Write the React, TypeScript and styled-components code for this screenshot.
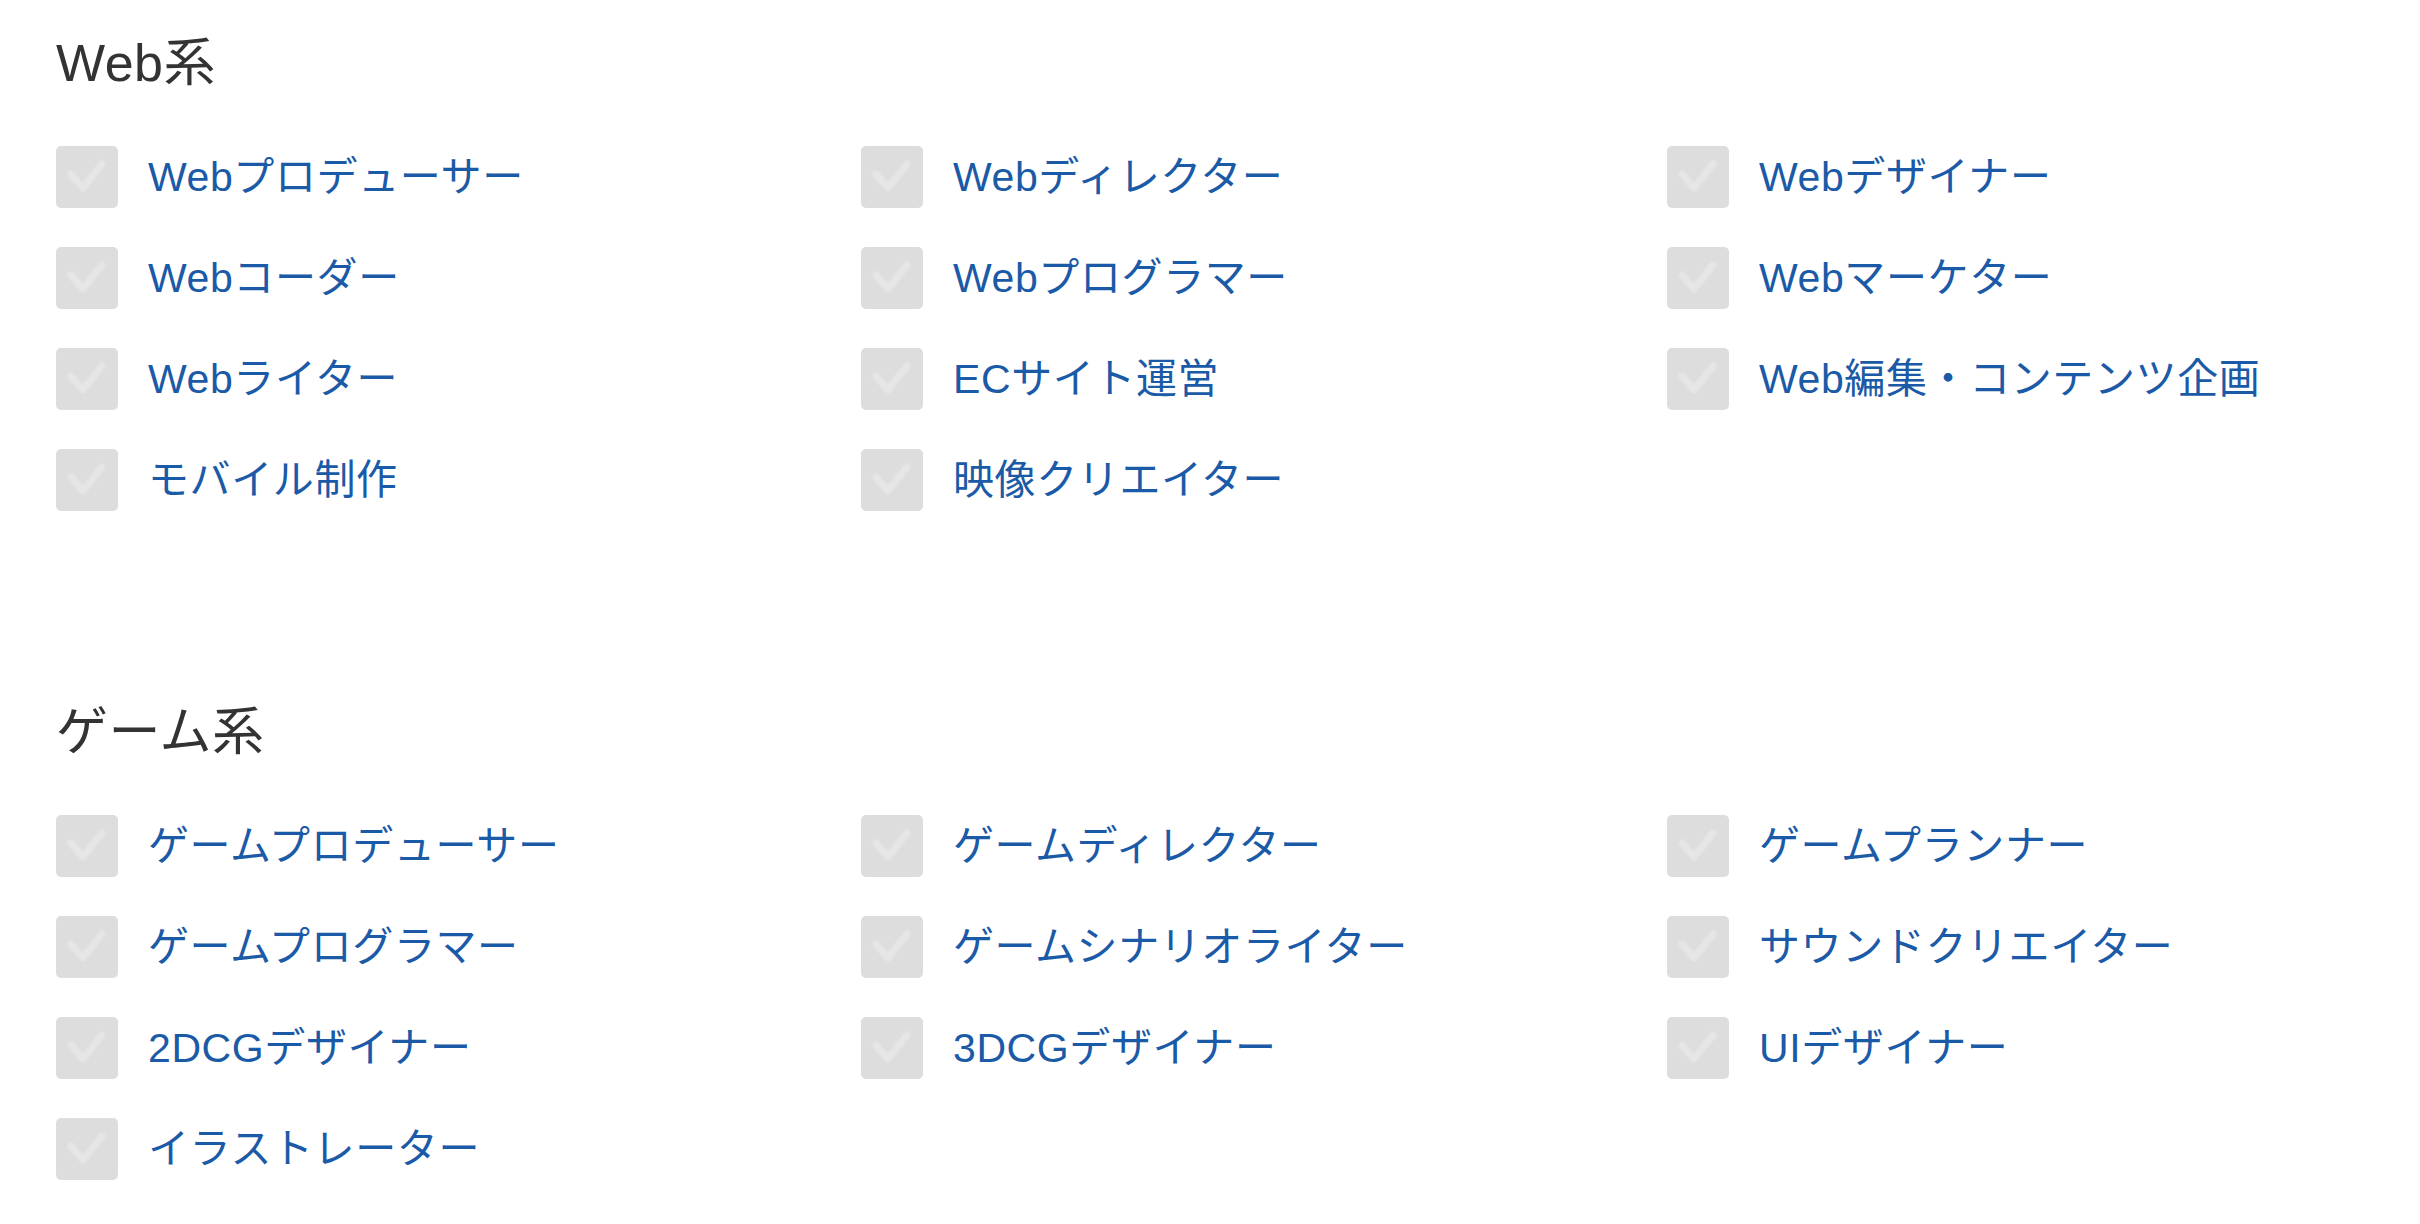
import styled, { createGlobalStyle } from "styled-components";

const GlobalStyle = createGlobalStyle`
  html, body {
    margin: 0;
    padding: 0;
    background: #ffffff;
    overflow: hidden;
  }
  body {
    font-family: "Liberation Sans", "Noto Sans CJK JP", sans-serif;
  }
`;

const Page = styled.div`
  padding: 28px 0 0 56px;
  display: flex;
  flex-direction: column;
  gap: 186px;
`;

const Section = styled.section`
  display: flex;
  flex-direction: column;
`;

const Heading = styled.h2`
  margin: 0 0 48px;
  font-size: 52px;
  line-height: 70px;
  font-weight: normal;
  letter-spacing: 0.5px;
  color: #333333;
`;

const List = styled.ul`
  margin: 0;
  padding: 0;
  list-style: none;
  display: grid;
  grid-template-columns: 805px 806px 1fr;
  row-gap: 39px;
`;

const Item = styled.li`
  display: flex;
  align-items: center;
  gap: 30px;
  height: 62px;
`;

const Box = styled.span`
  width: 62px;
  height: 62px;
  flex: none;
  border-radius: 5px;
  background: #dddddd;
  display: flex;
  align-items: center;
  justify-content: center;
`;

const Label = styled.a`
  font-size: 41px;
  line-height: 1;
  letter-spacing: 0.6px;
  color: #1b5aa7;
  text-decoration: none;
  white-space: nowrap;
`;

const Check = () => (
  <svg width="62" height="62" viewBox="0 0 62 62">
    <path
      d="M15 28 L27 42 L46 18"
      fill="none"
      stroke="#e6e6e6"
      strokeWidth="7"
      strokeLinecap="round"
      strokeLinejoin="round"
      style={{ filter: "blur(1px)" }}
    />
  </svg>
);

const web = [
  "Webプロデューサー",
  "Webディレクター",
  "Webデザイナー",
  "Webコーダー",
  "Webプログラマー",
  "Webマーケター",
  "Webライター",
  "ECサイト運営",
  "Web編集・コンテンツ企画",
  "モバイル制作",
  "映像クリエイター",
];

const game = [
  "ゲームプロデューサー",
  "ゲームディレクター",
  "ゲームプランナー",
  "ゲームプログラマー",
  "ゲームシナリオライター",
  "サウンドクリエイター",
  "2DCGデザイナー",
  "3DCGデザイナー",
  "UIデザイナー",
  "イラストレーター",
];

function Group({ title, items }: { title: string; items: string[] }) {
  return (
    <Section>
      <Heading>{title}</Heading>
      <List>
        {items.map((name) => (
          <Item key={name}>
            <Box>
              <Check />
            </Box>
            <Label href="#">{name}</Label>
          </Item>
        ))}
      </List>
    </Section>
  );
}

export default function App() {
  return (
    <>
      <GlobalStyle />
      <Page>
        <Group title="Web系" items={web} />
        <Group title="ゲーム系" items={game} />
      </Page>
    </>
  );
}
